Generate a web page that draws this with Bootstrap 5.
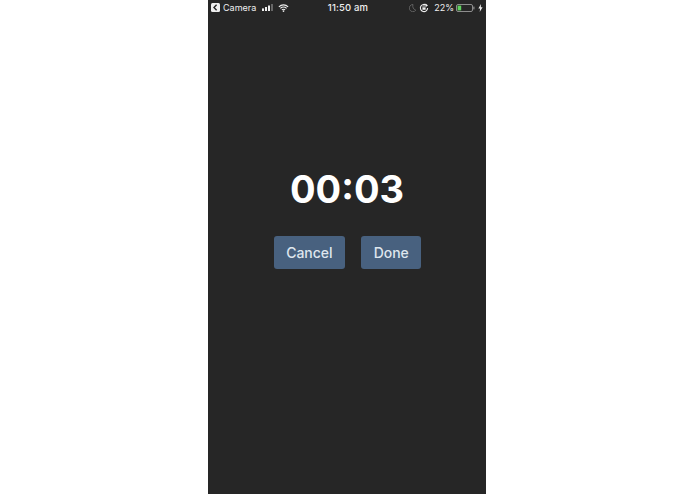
<!doctype html>
<html lang="en">
<head>
<meta charset="utf-8">
<title>Timer</title>
<link href="https://cdn.jsdelivr.net/npm/bootstrap@5.3.0/dist/css/bootstrap.min.css" rel="stylesheet">
<style>
html,body{height:100%;margin:0;background:#fff;overflow:hidden}
.stage{padding-left:208px}
.phone{width:278px;height:494px;background:#262626;color:#fff;font-family:Inter,"Liberation Sans",sans-serif}
.sbar{height:15px;padding:0 3px;font-size:9px;line-height:15px;color:#efefef;font-weight:400}
.sbar svg{display:block;flex:none}
.sleft,.sright{flex:1 1 0}
.sleft span{margin-left:3px;margin-right:6px}
.wifi{margin-left:4px}
.stime{font-weight:500;font-size:9.5px;letter-spacing:.15px;margin-left:2px}
.rot{margin-left:3px}
.pct{margin-left:5px;margin-right:2px}
.batt{margin-right:3px}
.clock{margin-top:149px;font-size:38px;font-weight:650;line-height:50px;letter-spacing:0}
.acts{margin-top:22px;gap:16px;padding-left:1px}
.btn.act{background:#48617f;border:0;color:#dfe6ee;font-size:14px;font-weight:500;height:33px;line-height:32px;padding:0 12.5px;border-radius:3px}
</style>
</head>
<body>
<div class="stage h-100">
<main class="phone d-flex flex-column">
  <div class="sbar d-flex align-items-center">
    <div class="sleft d-flex align-items-center">
      <svg width="9" height="9" viewBox="0 0 9 9"><rect width="9" height="9" rx="1.5" fill="#efefef"/><path d="M5.6 1.8 3 4.5l2.6 2.7" fill="none" stroke="#262626" stroke-width="1.4"/></svg>
      <span>Camera</span>
      <svg width="12" height="7" viewBox="0 0 12 7"><rect x="0" y="4.4" width="2" height="2.6" fill="#efefef"/><rect x="3" y="3" width="2" height="4" fill="#efefef"/><rect x="6" y="1.5" width="2" height="5.5" fill="#efefef"/><rect x="9" y="0" width="2" height="7" fill="#666"/></svg>
      <svg class="wifi" width="11" height="8" viewBox="0 0 12 9"><path d="M.8 3.2a7.4 7.4 0 0 1 10.4 0M2.5 5a5 5 0 0 1 7 0M4.2 6.7a2.5 2.5 0 0 1 3.6 0" fill="none" stroke="#efefef" stroke-width="1.3"/><circle cx="6" cy="8" r="1" fill="#efefef"/></svg>
    </div>
    <div class="stime">11:50 am</div>
    <div class="sright d-flex align-items-center justify-content-end">
      <svg width="7" height="8" viewBox="0 0 7 8"><path d="M4 .5A3.6 3.6 0 1 0 6.8 6.2 4.4 4.4 0 0 1 4 .5Z" fill="none" stroke="#666" stroke-width=".9"/></svg>
      <svg class="rot" width="10" height="10" viewBox="0 0 10 10"><path d="M8.6 5A3.6 3.6 0 1 1 7.4 2.3" fill="none" stroke="#efefef" stroke-width="1.1"/><path d="M6.6.6 9 2.4 6.8 3.9Z" fill="#efefef"/><rect x="3.4" y="4.4" width="3.2" height="2.4" fill="#efefef"/><path d="M4 4.4V3.6a1 1 0 0 1 2 0v.8" fill="none" stroke="#efefef" stroke-width=".7"/></svg>
      <span class="pct">22%</span>
      <svg class="batt" width="19" height="8" viewBox="0 0 19 8"><rect x=".5" y=".5" width="16" height="7" rx="1.5" fill="none" stroke="#a8a8a8" stroke-width=".8"/><rect x="1.6" y="1.6" width="3.6" height="4.8" fill="#5fd35f"/><rect x="17.4" y="2.6" width="1" height="2.8" fill="#a8a8a8"/></svg>
      <svg width="5" height="8" viewBox="0 0 5 8"><path d="M3 0 .4 4.5h1.7L1.7 8l2.9-4.8H2.8Z" fill="#efefef"/></svg>
    </div>
  </div>
  <div class="clock text-center">00:03</div>
  <div class="acts d-flex justify-content-center">
    <button type="button" class="btn act">Cancel</button>
    <button type="button" class="btn act">Done</button>
  </div>
</main>
</div>
<script src="https://cdn.jsdelivr.net/npm/bootstrap@5.3.0/dist/js/bootstrap.bundle.min.js"></script>
</body>
</html>
